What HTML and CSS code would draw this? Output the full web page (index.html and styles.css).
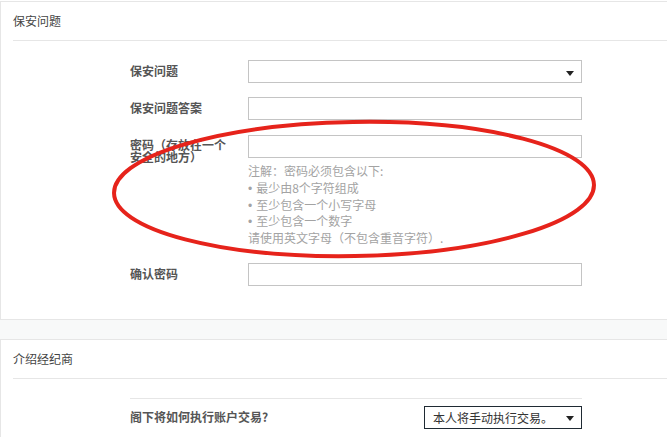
FILE: index.html
```html
<!DOCTYPE html>
<html lang="zh">
<head>
<meta charset="utf-8">
<title>保安问题</title>
<link rel="stylesheet" href="styles.css">
</head>
<body>
<div class="page">
  <section class="panel">
    <div class="panel-head">保安问题</div>
    <div class="panel-body">
      <div class="form-row">
        <div class="label">保安问题</div>
        <div class="field"><div class="select"><span class="caret"></span></div></div>
      </div>
      <div class="form-row">
        <div class="label">保安问题答案</div>
        <div class="field"><div class="input"></div></div>
      </div>
      <div class="form-row row-pw">
        <div class="label">密码（存放在一个安全的地方）</div>
        <div class="field">
          <div class="input"></div>
          <div class="hint">
            <div class="hint-line">注解：密码必须包含以下:</div>
            <div class="hint-line"><span class="dot">•</span>最少由8个字符组成</div>
            <div class="hint-line"><span class="dot">•</span>至少包含一个小写字母</div>
            <div class="hint-line"><span class="dot">•</span>至少包含一个数字</div>
            <div class="hint-line">请使用英文字母（不包含重音字符）.</div>
          </div>
        </div>
      </div>
      <div class="form-row">
        <div class="label">确认密码</div>
        <div class="field"><div class="input"></div></div>
      </div>
    </div>
  </section>
  <div class="gap"></div>
  <section class="panel">
    <div class="panel-head">介绍经纪商</div>
    <div class="panel-body body-2">
      <div class="rule"></div>
      <div class="form-row row-2">
        <div class="label">阁下将如何执行账户交易?</div>
        <div class="select select-dark">本人将手动执行交易。<span class="caret"></span></div>
      </div>
    </div>
  </section>
</div>
<svg class="annotation" width="667" height="437" viewBox="0 0 667 437">
  <ellipse cx="354" cy="189" rx="240" ry="67" transform="rotate(-1 354 189)" fill="none" stroke="#e6231b" stroke-width="4"/>
</svg>
</body>
</html>
```
FILE: styles.css
```css
html, body {
  margin: 0;
  padding: 0;
  background: #fff;
  overflow: hidden;
}
body {
  font-family: "Noto Sans CJK SC", "Noto Sans", sans-serif;
  font-size: 12px;
  color: #333;
}
.page {
  padding-top: 1px;
}
.panel {
  border: 1px solid #e6e6e6;
  border-right: none;
  background: #fff;
}
.panel-head {
  margin-left: 12px;
  height: 38px;
  line-height: 38px;
  font-size: 12px;
  color: #444;
  border-bottom: 1px solid #e6e6e6;
}
.panel-body {
  padding: 19px 0 33px 129px;
  display: flex;
  flex-direction: column;
  gap: 14px;
}
.form-row {
  display: grid;
  grid-template-columns: 118px 334px;
}
.row-pw {
  margin-top: 1px;
}
.label {
  padding: 5px 18px 0 0;
  line-height: 12px;
  font-weight: bold;
  color: #555;
  font-size: 12px;
}
.row-pw .label {
  padding-top: 4px;
}
.input, .select {
  box-sizing: border-box;
  height: 23px;
  border: 1px solid #c4c4c4;
  background: #fff;
  position: relative;
}
.caret {
  position: absolute;
  right: 7px;
  top: 10px;
  width: 0;
  height: 0;
  border-left: 4px solid transparent;
  border-right: 4px solid transparent;
  border-top: 5px solid #222;
}
.hint {
  margin-top: 5px;
  padding-bottom: 2px;
  color: #a3a3a3;
  font-size: 12px;
}
.hint-line {
  height: 16.8px;
  line-height: 16.8px;
  overflow: hidden;
}
.dot {
  font-family: "Liberation Sans", Arial, sans-serif;
  line-height: 1;
  margin-right: 4px;
}
.gap {
  height: 19px;
  background: #f8f9f9;
}
.body-2 {
  padding-bottom: 20px;
  gap: 0;
}
.rule {
  width: 452px;
  border-top: 1px solid #e6e6e6;
}
.row-2 {
  margin-top: 7px;
  grid-template-columns: 294px 158px;
}
.row-2 .label {
  padding-top: 5px;
}
.select-dark {
  border-color: #1f2a33;
  padding-left: 8px;
  line-height: 21px;
  font-size: 12px;
  color: #333;
}
.select-dark .caret {
  top: 9px;
}
.annotation {
  position: absolute;
  left: 0;
  top: 0;
  pointer-events: none;
}
```
